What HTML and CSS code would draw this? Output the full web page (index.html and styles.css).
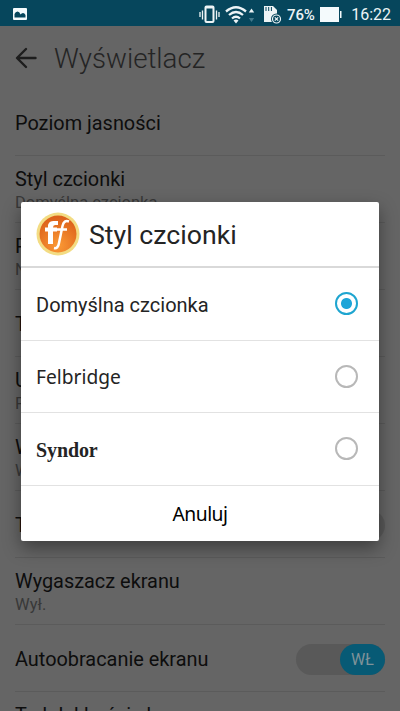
FILE: index.html
```html
<!DOCTYPE html>
<html lang="pl">
<head>
<meta charset="utf-8">
<title>Wyświetlacz</title>
<link rel="stylesheet" href="styles.css">
</head>
<body>
<div class="screen">
  <header class="status">
    <svg class="picture" width="14" height="12" viewBox="0 0 14 12"><rect width="14" height="12" rx="1" fill="#f4fafc"/><path d="M1.500 9.500V6q1-2.500 3-2.500T7.500 6.500q1-1.500 2.500-1.500t2.500 2v2.500z" fill="#06465c"/></svg>
    <svg class="indicators" width="84" height="24" viewBox="0 0 84 24" fill="none" stroke="#edf4f6">
      <path d="M1 11v5M3.500 9.500v9M17.500 9.500v9M20 11v5" stroke-width="1.300"/>
      <rect x="6.500" y="5.500" width="8" height="15.500" rx="1" stroke-width="2"/><path d="M6.500 6.500h8" stroke-width="2"/>
      <path d="M27 10.500q10-8.500 20 0M30 14q7-6 14 0M33 17.500q4-3.500 8 0" stroke-width="2.300"/><path d="M37 22.500l-2.500-3q2.500-2 5 0z" fill="#edf4f6" stroke="none"/>
      <path d="M49.800 11.500l2.700-4 2.700 4z" fill="#edf4f6" stroke="none"/><path d="M49.800 17l2.700 4 2.700-4z" fill="#44798b" stroke="none"/>
      <path d="M65 5h9l4 4v12H65z" fill="#edf4f6" stroke="none"/><path d="M67 6v4M69.700 6v4M72.400 6v4" stroke="#06465c"/>
      <circle cx="77.500" cy="18" r="5.500" fill="#06465c" stroke="none"/><circle cx="77.500" cy="18" r="4" stroke-width="1.200"/><path d="M75.800 16.300l3.400 3.400M79.200 16.300l-3.400 3.400" stroke-width="1.200"/>
    </svg>
    <span class="percent">76%</span>
    <svg class="battery" width="22" height="15" viewBox="0 0 22 15"><path d="M0 0h19v15H0zM20 4h1.500v7H20z" fill="#f4fafc"/></svg>
    <span class="clock">16:22</span>
  </header>
  <div class="titlebar">
    <svg width="22" height="22" viewBox="0 0 22 22" fill="none" stroke="#1d1d1d" stroke-width="2.400" stroke-linecap="round" stroke-linejoin="round"><path d="M20.500 11H2.500M11 2L2 11l9 9"/></svg>
    <h1>Wyświetlacz</h1>
  </div>
  <main class="settings">
    <div class="item"><b>Poziom jasności</b></div>
    <div class="item double"><b>Styl czcionki</b><small>Domyślna czcionka</small></div>
    <div class="item double"><b>P</b><small>N</small></div>
    <div class="item"><b>T</b></div>
    <div class="item double"><b>U</b><small>P</small></div>
    <div class="item double"><b>W</b><small>W</small></div>
    <div class="item switchable"><b>T</b><span class="toggle"></span></div>
    <div class="item double"><b>Wygaszacz ekranu</b><small>Wył.</small></div>
    <div class="item switchable"><b>Autoobracanie ekranu</b><span class="toggle"><i>WŁ</i></span></div>
    <div class="item last"><b>Tryb lekkości ekranu</b></div>
  </main>
  <section class="dialog">
    <div class="head">
      <svg width="44" height="44" viewBox="0 0 44 44">
        <defs><radialGradient id="orb" cx="50%" cy="80%" r="75%"><stop offset="0" stop-color="#fb9a35"/><stop offset="1" stop-color="#dc611b"/></radialGradient></defs>
        <circle cx="22" cy="22" r="21.500" fill="#f3dc83"/><circle cx="22" cy="22" r="18.500" fill="url(#orb)"/>
        <path d="M12 32V19.500H9v-4h3q-.5-7 6-6.500h4v4h-3q-2 0-2 2.500h4v4h-4V32z" fill="#fff"/>
        <path d="M33 9.500q-5-2-6.500 4.500l-3.500 17q-1 6-5 5M21 17.500h10" fill="none" stroke="#fff" stroke-width="2.500"/>
      </svg>
      <h2>Styl czcionki</h2>
    </div>
    <div class="option"><span class="name">Domyślna czcionka</span><span class="radio on"></span></div>
    <div class="option"><span class="name felbridge">Felbridge</span><span class="radio"></span></div>
    <div class="option"><span class="name syndor">Syndor</span><span class="radio"></span></div>
    <div class="cancel">Anuluj</div>
  </section>
</div>
</body>
</html>
```
FILE: styles.css
```css
* { box-sizing: border-box; }
body { margin: 0; font-family: Roboto, sans-serif; }
.screen { position: relative; width: 400px; height: 711px; overflow: hidden; background: #656565; color: #0d0d0d; }
.status { height: 26px; background: #06465c; color: #edf4f6; display: flex; align-items: center; padding: 0 9px 0 13px; font-size: 16px; }
.status .picture { flex: none; margin: 2px 172px 0 0; }
.indicators { flex: none; }
.percent { width: 33px; margin-left: 4px; font-size: 15px; font-weight: 500; letter-spacing: -.1px; padding-top: 3px; }
.battery { flex: none; margin-top: 2px; }
.clock { margin-left: auto; padding-top: 3px; }
.titlebar { height: 63px; display: flex; align-items: center; padding: 0 15px; gap: 17px; color: #242424; }
h1 { margin: 2px 0 0; font-size: 27.700px; font-weight: 300; }
.settings { padding: 0 15px; }
.item { height: 67px; border-bottom: 1px solid #5b5b5b; display: flex; flex-direction: column; justify-content: center; padding-top: 4px; }
.item b { font-weight: 400; font-size: 19.900px; line-height: 24px; white-space: nowrap; }
.item small { font-size: 16.500px; line-height: 20px; color: #383838; margin-top: 1px; }
.double { padding-top: 2px; }
.switchable { flex-direction: row; align-items: center; justify-content: space-between; padding-top: 2px; }
.switchable b { padding-top: 2px; }
.last { justify-content: flex-start; padding-top: 12px; }
.toggle { width: 89px; height: 31px; border-radius: 16px; background: #595959; display: flex; justify-content: flex-end; }
.toggle i { width: 45px; border-radius: 16px; background: #075a75; color: #7f9299; font: 16px/32px Roboto, sans-serif; text-align: center; }
.dialog { position: absolute; left: 21px; top: 202px; width: 358px; height: 339px; background: #fff; border-radius: 2px; box-shadow: 0 7px 18px rgba(0,0,0,.4); color: #242424; }
.head { height: 66px; border-bottom: 2px solid #d9d9d9; display: flex; align-items: center; padding-left: 15px; gap: 9px; }
h2 { margin: 2px 0 0; font-size: 26.700px; font-weight: 400; }
.option { height: 72.500px; border-bottom: 1px solid #e2e2e2; padding: 0 21px 0 15px; display: flex; align-items: center; justify-content: space-between; font-size: 20px; }
.name { padding-top: 2px; }
.radio { width: 23px; height: 23px; border: 2px solid #b8b8b8; border-radius: 50%; }
.radio.on { border-color: #1ea5d0; background: radial-gradient(circle, #1ea5d8 5px, #fff 6px); }
.felbridge { font-family: "Noto Sans", sans-serif; font-size: 19.200px; padding-top: 0; }
.syndor { font-family: "Liberation Serif", serif; font-weight: 700; font-size: 20px; letter-spacing: -.1px; padding-top: 3px; }
.cancel { height: 55px; padding-top: 1px; display: flex; align-items: center; justify-content: center; font-family: "Noto Sans", sans-serif; font-size: 19.300px; letter-spacing: -.5px; color: #000; }
```
